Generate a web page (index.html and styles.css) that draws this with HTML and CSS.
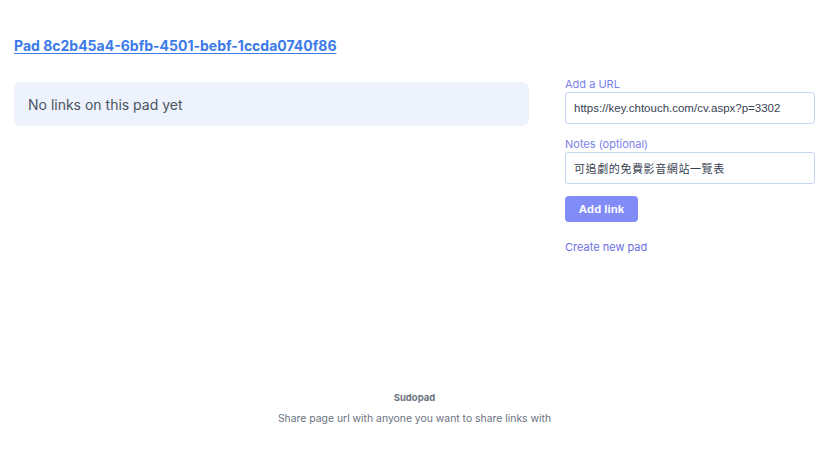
FILE: index.html
```html
<!DOCTYPE html>
<html lang="en">
<head>
<meta charset="utf-8">
<title>Sudopad</title>
<link rel="stylesheet" href="styles.css">
</head>
<body>
<div class="page">
  <header class="header">
    <a class="pad-title" href="#">Pad 8c2b45a4-6bfb-4501-bebf-1ccda0740f86</a>
  </header>
  <main class="main">
    <section class="links">
      <div class="empty">No links on this pad yet</div>
    </section>
    <aside class="side">
      <form class="form">
        <label class="label">Add a URL</label>
        <input class="input" type="text" value="https://key.chtouch.com/cv.aspx?p=3302">
        <label class="label label-notes">Notes (optional)</label>
        <input class="input input-cjk" type="text" value="可追劇的免費影音網站一覽表">
        <button class="btn" type="button">Add link</button>
      </form>
      <a class="new-pad" href="#">Create new pad</a>
    </aside>
  </main>
  <footer class="footer">
    <div class="brand">Sudopad</div>
    <div class="tagline">Share page url with anyone you want to share links with</div>
  </footer>
</div>
</body>
</html>
```
FILE: styles.css
```css
html, body {
  margin: 0;
  padding: 0;
  background: #ffffff;
}
body {
  font-family: Inter, "Noto Sans", sans-serif;
  color: #374151;
}
.page {
  width: 830px;
  height: 459px;
  box-sizing: border-box;
  padding: 0 15px 0 14px;
  display: flex;
  flex-direction: column;
}
.header {
  padding-top: 35px;
  height: 46px;
  box-sizing: border-box;
}
.pad-title {
  font-size: 14px;
  font-weight: 700;
  color: #3b7bea;
  text-decoration: underline;
  text-underline-offset: 2px;
  line-height: 18px;
  display: inline-block;
}
.main {
  display: flex;
  gap: 36px;
  margin-top: 31px;
}
.links {
  width: 515px;
  flex: none;
  padding-top: 5px;
}
.empty {
  height: 44px;
  box-sizing: border-box;
  background: #edf2fc;
  border-radius: 6px;
  padding: 0 14px;
  display: flex;
  align-items: center;
  font-size: 14px;
  color: #4b5563;
}
.side {
  flex: 1;
  display: flex;
  flex-direction: column;
}
.form {
  display: flex;
  flex-direction: column;
  align-items: flex-start;
}
.label {
  font-size: 11px;
  line-height: 14px;
  color: #7c7fe8;
  margin-bottom: 1px;
}
.label-notes {
  margin-top: 13px;
  margin-bottom: 1px;
}
.input {
  width: 250px;
  height: 32px;
  box-sizing: border-box;
  border: 1.5px solid #c7d5f5;
  border-radius: 3px;
  padding: 0 8px;
  font-family: "Liberation Sans", Arial, "Noto Sans CJK TC", sans-serif;
  font-size: 11.5px;
  color: #374151;
  background: #fff;
  outline: none;
}
.input-cjk {
  font-size: 11px;
  letter-spacing: 0.6px;
}
.btn {
  margin-top: 12px;
  width: 73px;
  height: 26px;
  border: none;
  border-radius: 4px;
  background: #818cf8;
  color: #fff;
  font-family: "Liberation Sans", Arial, sans-serif;
  font-weight: 700;
  font-size: 11.5px;
  padding: 0;
}
.new-pad {
  margin-top: 18px;
  font-size: 11px;
  color: #6b70e0;
  text-decoration: none;
  line-height: 14px;
}
.footer {
  margin-top: auto;
  padding-bottom: 34px;
  text-align: center;
}
.brand {
  font-size: 9.5px;
  font-weight: 700;
  color: #6b7280;
  line-height: 12px;
}
.tagline {
  margin-top: 9px;
  font-size: 10.4px;
  color: #6b7280;
  line-height: 12px;
}
```
